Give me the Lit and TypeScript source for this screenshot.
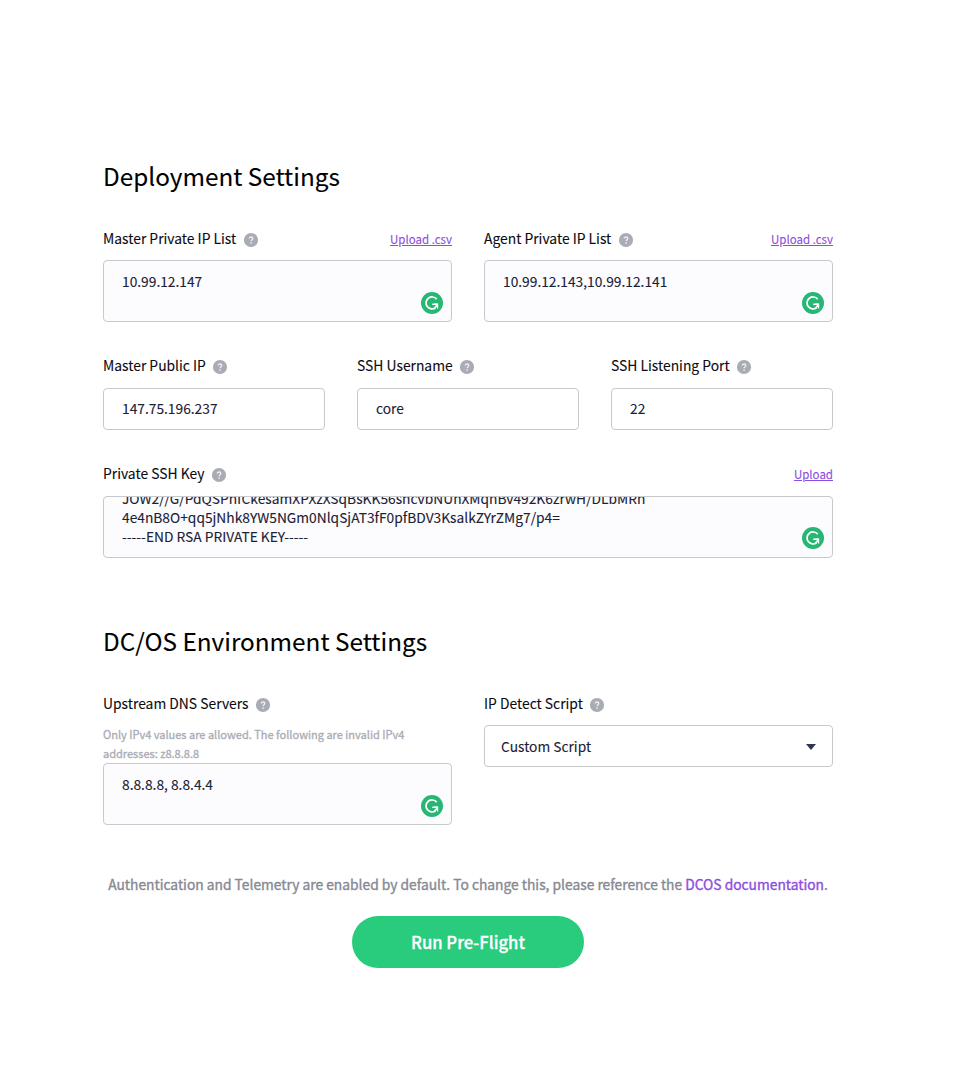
import { LitElement, html, css, svg, nothing } from "lit";
import { customElement, property } from "lit/decorators.js";

const base = css`
  :host {
    display: block;
    box-sizing: border-box;
    font-family: "Noto Sans CJK SC", "Noto Sans", sans-serif;
    color: #0a0a0f;
    -webkit-text-stroke: 0.1px currentColor;
  }
  * {
    box-sizing: border-box;
  }
`;

@customElement("help-icon")
class HelpIcon extends LitElement {
  static styles = css`
    :host {
      display: block;
      width: 14px;
      height: 14px;
    }
    svg {
      display: block;
      overflow: visible;
    }
  `;
  render() {
    return html`<svg width="14" height="14" viewBox="0 0 14 14">
      ${svg`<circle cx="7" cy="7" r="7.1" fill="#a9acb4"/>
      <path d="M5.2 5.6C5.2 4.5 6 4 7.05 4C8.1 4 8.8 4.6 8.8 5.4C8.8 6.6 7.1 6.8 7.1 8.3" fill="none" stroke="#f0f0f3" stroke-width="1.3"/>
      <circle cx="7.1" cy="10" r=".85" fill="#f0f0f3"/>`}
    </svg>`;
  }
}

@customElement("grammar-badge")
class GrammarBadge extends LitElement {
  static styles = css`
    :host {
      display: block;
      width: 22px;
      height: 22px;
    }
    svg {
      display: block;
    }
  `;
  render() {
    return html`<svg width="22" height="22" viewBox="0 0 22 22">
      ${svg`<circle cx="11" cy="11" r="11" fill="#27b673"/>
      <path d="M15.7 7.2A6 6 0 1 0 14.6 15.8" fill="none" stroke="#fff" stroke-width="1.7"/>
      <path d="M11.2 12.3H16.6" fill="none" stroke="#fff" stroke-width="1.5"/>
      <path d="M12.9 11.6H17.2V16.4H16L15.6 14.8L13.8 16.4L13 15.4L15.2 13Z" fill="#fff"/>`}
    </svg>`;
  }
}

@customElement("form-field")
class FormField extends LitElement {
  @property() label = "";
  @property() upload = "";
  @property() hint = "";
  @property() value = "";
  @property() kind = "input";

  static styles = [
    base,
    css`
      .head {
        display: flex;
        align-items: center;
        height: 22px;
        margin-bottom: var(--label-gap, 10px);
      }
      .label {
        font-size: 13.85px;
        line-height: 22px;
        margin-right: 7.4px;
        padding-bottom: 2px;
        white-space: nowrap;
      }
      help-icon {
        margin-top: 2px;
      }
      .upload {
        margin-left: auto;
        font-size: 11.5px;
        line-height: 22px;
        color: #8d4de0;
        text-decoration: underline;
        padding-bottom: 1px;
      }
      .hint {
        font-size: 11.03px;
        line-height: 19px;
        color: #a9acb4;
        -webkit-text-stroke-width: 0.3px;
      }
      .box {
        position: relative;
        border: 1px solid #c8c9cc;
        border-radius: 4px;
        background: #fff;
        color: #1b2033;
        font-size: 13.78px;
        line-height: 19px;
      }
      .input {
        height: 42px;
        padding: 10px 18px;
      }
      .area {
        height: 62px;
        padding: 11px 18px;
        background: #fcfcff;
      }
      .scrolled {
        display: flex;
        flex-direction: column;
        justify-content: flex-end;
        overflow: hidden;
        padding: 0 18px 11px;
      }
      .text {
        white-space: pre;
      }
      .select {
        height: 42px;
        padding: 0 16px;
        display: flex;
        align-items: center;
        justify-content: space-between;
      }
      .select svg {
        display: block;
        margin-top: 1px;
      }
      grammar-badge {
        position: absolute;
        right: 8px;
        bottom: 7.5px;
      }
      .scrolled grammar-badge {
        bottom: 8px;
      }
    `,
  ];

  body() {
    if (this.kind === "select") {
      return html`<div class="box select">
        <span class="text">${this.value}</span>
        <svg width="10" height="6" viewBox="0 0 10 6"><path d="M0 0H10L5 6Z" fill="#2f3750" /></svg>
      </div>`;
    }
    if (this.kind === "input") {
      return html`<div class="box input"><div class="text">${this.value}</div></div>`;
    }
    return html`<div class="box area ${this.kind === "scrolled" ? "scrolled" : ""}">
      <div class="text">${this.value}</div>
      <grammar-badge></grammar-badge>
    </div>`;
  }

  render() {
    return html`
      <div class="head">
        <span class="label">${this.label}</span><help-icon></help-icon>
        ${this.upload ? html`<a class="upload">${this.upload}</a>` : nothing}
      </div>
      ${this.hint ? html`<div class="hint">${this.hint}</div>` : nothing}
      ${this.body()}
    `;
  }
}

const KEY = [
  "JOW2//G/PdQSPhfCkesamXPXzXSqBsKK56shcvbNUhXMqhBv492K6zrwH/DLbMRh",
  "4e4nB8O+qq5jNhk8YW5NGm0NlqSjAT3fF0pfBDV3KsalkZYrZMg7/p4=",
  "-----END RSA PRIVATE KEY-----",
].join("\n");

@customElement("app-root")
class AppRoot extends LitElement {
  static styles = [
    base,
    css`
      :host {
        height: 1088px;
        background: #fff;
        padding: 156px 140px 0 103px;
        overflow: hidden;
      }
      h1 {
        margin: 0 0 32px;
        font-weight: 400;
        font-size: 24.3px;
        line-height: 40px;
        white-space: nowrap;
        color: #000;
      }
      .row {
        display: grid;
        gap: 32px;
      }
      .two {
        grid-template-columns: 1fr 1fr;
      }
      .three {
        grid-template-columns: 1fr 1fr 1fr;
        margin: 33px 0;
        --label-gap: 11px;
      }
      .one {
        --label-gap: 11px;
        margin-bottom: 63px;
      }
      .note {
        margin: 49px 0 0;
        text-align: center;
        font-size: 13.8px;
        line-height: 20px;
        color: #868993;
        white-space: nowrap;
        -webkit-text-stroke-width: 0.35px;
      }
      .note a {
        color: #8d4de0;
      }
      .run {
        display: block;
        margin: 22px auto 0;
        width: 232px;
        height: 52px;
        border: 0;
        border-radius: 26px;
        padding: 0;
        background: #29cb7c;
        color: #fff;
        font-family: inherit;
        font-size: 16.65px;
        font-weight: 500;
        line-height: 52px;
        -webkit-text-stroke: 0.3px #fff;
      }
    `,
  ];

  render() {
    return html`
      <h1>Deployment Settings</h1>
      <div class="row two">
        <form-field kind="area" label="Master Private IP List" upload="Upload .csv" value="10.99.12.147"></form-field>
        <form-field kind="area" label="Agent Private IP List" upload="Upload .csv" value="10.99.12.143,10.99.12.141"></form-field>
      </div>
      <div class="row three">
        <form-field label="Master Public IP" value="147.75.196.237"></form-field>
        <form-field label="SSH Username" value="core"></form-field>
        <form-field label="SSH Listening Port" value="22"></form-field>
      </div>
      <div class="row one">
        <form-field kind="scrolled" label="Private SSH Key" upload="Upload" .value=${KEY}></form-field>
      </div>
      <h1>DC/OS Environment Settings</h1>
      <div class="row two">
        <form-field
          kind="area"
          label="Upstream DNS Servers"
          hint="Only IPv4 values are allowed. The following are invalid IPv4 addresses: z8.8.8.8"
          value="8.8.8.8, 8.8.4.4"
        ></form-field>
        <form-field kind="select" label="IP Detect Script" value="Custom Script"></form-field>
      </div>
      <p class="note">Authentication and Telemetry are enabled by default. To change this, please reference the <a>DCOS documentation</a>.</p>
      <button class="run">Run Pre-Flight</button>
    `;
  }
}
